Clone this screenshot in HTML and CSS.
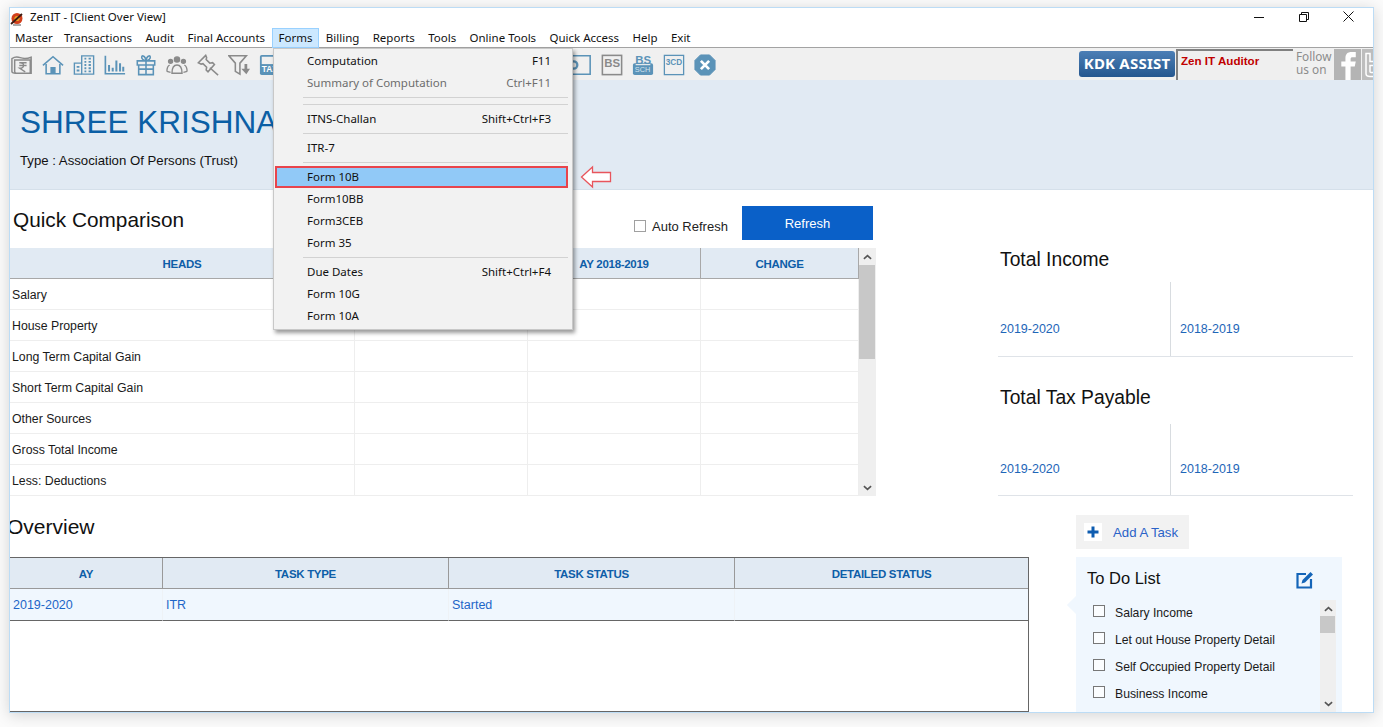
FILE: index.html
```html
<!DOCTYPE html>
<html lang="en">
<head>
<meta charset="utf-8">
<title>ZenIT - [Client Over View]</title>
<link rel="stylesheet" href="styles.css">
</head>
<body>
<div class="window">
  <div class="titlebar">
    <svg class="appicon" viewBox="0 0 14 14"><circle cx="7" cy="6.500" r="5.500" fill="#d2401c"/><circle cx="7" cy="6.500" r="2.600" fill="#e8a526"/><path d="M1 12 12 2" stroke="#3a1a10" stroke-width="1.800"/><path d="M3 13h8" stroke="#555" stroke-width="1"/></svg>
    <span class="titletext">ZenIT - [Client Over View]</span>
    <div class="winbtns">
      <span class="winbtn"><svg width="10" height="10" viewBox="0 0 10 10"><path d="M0 5.500h10" stroke="#111"/></svg></span>
      <span class="winbtn"><svg width="10" height="10" viewBox="0 0 10 10"><path d="M.5 2.500h7v7h-7zM2.500 2.500v-2h7v7h-2" fill="none" stroke="#111"/></svg></span>
      <span class="winbtn"><svg width="11" height="11" viewBox="0 0 11 11"><path d="M.5.500l10 10M10.500.500l-10 10" stroke="#111"/></svg></span>
    </div>
  </div>
  <nav class="menubar">
    <span class="mi">Master</span><span class="mi">Transactions</span><span class="mi">Audit</span><span class="mi">Final Accounts</span><span class="mi mi-active">Forms</span><span class="mi">Billing</span><span class="mi">Reports</span><span class="mi">Tools</span><span class="mi">Online Tools</span><span class="mi">Quick Access</span><span class="mi">Help</span><span class="mi">Exit</span>
  </nav>
  <div class="toolbar">
    <div class="tools">
      <svg class="ti" viewBox="0 0 24 24" fill="none" stroke="#8a8a8a" stroke-width="1.600"><path d="M1 5c3-2 6-2 9-1s8 1 12-.5V21H5c-2 0-4-.5-4-2z"/><path d="M4 6.500h17V21H6c-1.500 0-2-1-2-2z" fill="#f0f0f0"/><path d="M9 9.500h8M9 12.500h8M10 9.500c5 0 5 6-.5 6l6 4" stroke-width="1.500"/></svg>
      <svg class="ti" viewBox="0 0 24 24" fill="none" stroke="#5b93b8" stroke-width="1.700"><path d="M1 12.500 12 3l11 9.500"/><path d="M4.500 11v10.500h15V11"/><path d="M10 21.500V15h4v6.500" fill="#5b93b8"/></svg>
      <svg class="ti" viewBox="0 0 24 24" fill="none" stroke="#5b93b8" stroke-width="1.500"><path d="M9.500 22V2h13v20z"/><path d="M9.500 10h-8v12h8"/><path d="M12.500 5h2M17 5h2.500M12.500 8.500h2M17 8.500h2.500M12.500 12h2M17 12h2.500M12.500 15.500h2M17 15.500h2.500M12.500 19h2M17 19h2.500M4 14h3M4 18h3" stroke-width="2"/></svg>
      <svg class="ti" viewBox="0 0 24 24" fill="none" stroke="#5b93b8" stroke-width="1.800"><path d="M1.500 2v19.500H23"/><path d="M5.500 19v-7M9.500 19v-4M13.500 19V7M17.500 19v-9M21 19v-5" stroke-width="2.200"/></svg>
      <svg class="ti" viewBox="0 0 24 24" fill="none" stroke="#5b93b8" stroke-width="1.700"><path d="M2.500 7.500h19v4.500h-19zM4 12v10.500h16V12M12 7.500v15M4 16.500h16"/><path d="M12 7C9 7 6.500 5 7.500 2.500 9 1 11.500 3.500 12 7c.5-3.500 3-6 4.500-4.500C17.500 5 15 7 12 7z"/></svg>
      <svg class="ti" viewBox="0 0 24 24" fill="none" stroke="#8a8a8a" stroke-width="1.500"><circle cx="5" cy="8" r="2.200" fill="#8a8a8a"/><circle cx="12" cy="6" r="2.800" fill="#8a8a8a"/><circle cx="19" cy="8" r="2.200" fill="#8a8a8a"/><path d="M1 19c0-4 1-6 3-7M23 19c0-4-1-6-3-7M6.500 21c0-5 1-9 5.500-9s5.500 4 5.500 9zM1 19l4 1M23 19l-4 1"/></svg>
      <svg class="ti" viewBox="0 0 24 24" fill="none" stroke="#8a8a8a" stroke-width="1.700"><path d="M9.500 1.500 1.500 9.500l3 1.500 2-.5 4 4-.5 3 2 2 7-8-2-2-3 .5-4-4 .5-2z"/><path d="m14 15 9 8"/></svg>
      <svg class="ti" viewBox="0 0 24 24" fill="none" stroke="#8a8a8a" stroke-width="1.700"><path d="M1 2h19l-7 8v12l-5-3v-9z"/><path d="M18 11v5h-3.500l5.500 6 4-6h-3v-5z" fill="#8a8a8a" stroke="none"/></svg>
      <svg class="ti" viewBox="0 0 24 24"><rect x="1" y="1" width="22" height="22" rx="2" fill="#5b93b8"/><rect x="3" y="3" width="18" height="8" fill="#f0f0f0"/><text class="ti-text" x="3" y="20" fill="#fff">TAX</text></svg>
      <div class="tool-gap"></div>
      <svg class="ti" viewBox="0 0 24 24" fill="none" stroke="#5b93b8" stroke-width="1.700"><path d="M2 2h20v20H2z"/><circle cx="4" cy="12" r="4" stroke-width="2.500"/></svg>
      <svg class="ti" viewBox="0 0 24 24"><rect x="1.500" y="1.500" width="21" height="21" fill="none" stroke="#8a8a8a" stroke-width="1.700"/><text class="ti-text ti-big" x="3.500" y="14" fill="#8a8a8a">BS</text></svg>
      <svg class="ti" viewBox="0 0 24 24"><rect x="1" y="10" width="22" height="13" rx="2" fill="#5b93b8"/><text class="ti-text ti-big" x="3.500" y="11" fill="#5b93b8">BS</text><rect x="4" y="11" width="16" height="1.200" fill="#f0f0f0"/><text class="ti-small" x="3" y="20" fill="#d4e3ee">SCH</text></svg>
      <svg class="ti" viewBox="0 0 24 24"><rect x="1.500" y="1.500" width="21" height="21" fill="none" stroke="#5b93b8" stroke-width="1.400"/><text class="ti-3cd" x="3" y="12" fill="#5b93b8">3CD</text></svg>
      <svg class="ti ti-end" viewBox="0 0 24 24"><path d="M7 1h10l6 6v10l-6 6H7l-6-6V7z" fill="#5b93b8" stroke="#5b93b8" stroke-linejoin="round"/><path d="m7.500 7.500 9 9M16.500 7.500l-9 9" stroke="#fff" stroke-width="3"/></svg>
    </div>
    <div class="kdk">KDK ASSIST</div>
    <div class="zen">Zen IT Auditor</div>
    <div class="follow">Follow<br>us on</div>
    <div class="social"><svg viewBox="0 0 26 30"><path d="M11 30V17H7v-5h4V9c0-4 2-6 6-6h4v5h-3c-1.500 0-2 .5-2 2v2h5l-1 5h-4v13z" fill="#fff"/></svg></div>
    <div class="social social-tw"><svg viewBox="0 0 14 30"><path d="M4 4v20c0 2 2 3 4 3h6v-4H9c-1 0-1-.5-1-1v-6h6v-4H8V4z" fill="none" stroke="#fff" stroke-width="1.500"/></svg></div>
  </div>

  <header class="client">
    <h1 class="client-name">SHREE KRISHNA</h1>
    <p class="client-type">Type : Association Of Persons (Trust)</p>
  </header>

  <div class="row-top">
    <section class="compare">
      <div class="compare-head">
        <h2 class="h-quick">Quick Comparison</h2>
        <label class="auto"><span class="cb"></span>Auto Refresh</label>
        <button class="refresh">Refresh</button>
      </div>
      <div class="compare-body">
        <table class="grid">
          <colgroup><col class="c1"><col class="c2"><col class="c2"><col class="c3"></colgroup>
          <thead><tr><th>HEADS</th><th>AY 2019-2020</th><th>AY 2018-2019</th><th>CHANGE</th></tr></thead>
          <tbody>
            <tr><td>Salary</td><td></td><td></td><td></td></tr>
            <tr><td>House Property</td><td></td><td></td><td></td></tr>
            <tr><td>Long Term Capital Gain</td><td></td><td></td><td></td></tr>
            <tr><td>Short Term Capital Gain</td><td></td><td></td><td></td></tr>
            <tr><td>Other Sources</td><td></td><td></td><td></td></tr>
            <tr><td>Gross Total Income</td><td></td><td></td><td></td></tr>
            <tr><td>Less: Deductions</td><td></td><td></td><td></td></tr>
          </tbody>
        </table>
        <div class="sb sb-main">
          <svg class="sb-arrow" viewBox="0 0 10 6"><path d="m1 5 4-3.500L9 5" fill="none" stroke="#555" stroke-width="1.800"/></svg>
          <div class="sb-thumb"></div>
          <svg class="sb-arrow sb-down" viewBox="0 0 10 6"><path d="m1 1 4 3.500L9 1" fill="none" stroke="#555" stroke-width="1.800"/></svg>
        </div>
      </div>
    </section>
    <aside class="totals">
      <h3 class="t-title">Total Income</h3>
      <div class="t-box"><span>2019-2020</span><span>2018-2019</span></div>
      <h3 class="t-title t-title2">Total Tax Payable</h3>
      <div class="t-box t-box2"><span>2019-2020</span><span>2018-2019</span></div>
    </aside>
  </div>

  <div class="row-bottom">
    <section class="overview">
      <h2 class="h-over">Overview</h2>
      <div class="ov-frame">
        <table class="ov">
          <colgroup><col class="o1"><col class="o2"><col class="o2"><col class="o3"></colgroup>
          <thead><tr><th>AY</th><th>TASK TYPE</th><th>TASK STATUS</th><th>DETAILED STATUS</th></tr></thead>
          <tbody><tr><td>2019-2020</td><td>ITR</td><td>Started</td><td></td></tr></tbody>
        </table>
      </div>
    </section>
    <aside class="tasks">
      <div class="add">
        <svg class="add-plus" viewBox="0 0 18 18"><rect width="18" height="18" fill="#fff"/><path d="M9 3.500v11M3.500 9h11" stroke="#0e5cb0" stroke-width="3"/></svg>
        <span>Add A Task</span>
      </div>
      <div class="todo">
        <span class="notch"></span>
        <div class="todo-head">
          <h3 class="todo-title">To Do List</h3>
          <svg class="todo-edit" viewBox="0 0 18 18"><path d="M10 3H1.500v13.500H15V8" fill="none" stroke="#1565b8" stroke-width="2.200"/><path d="M5.500 12.500 6.500 9l8-8 2.500 2.500-8 8z" fill="#1565b8"/></svg>
        </div>
        <div class="todo-body">
          <ul class="todo-list">
            <li><span class="cb cb-dark"></span>Salary Income</li>
            <li><span class="cb cb-dark"></span>Let out House Property Detail</li>
            <li><span class="cb cb-dark"></span>Self Occupied Property Detail</li>
            <li><span class="cb cb-dark"></span>Business Income</li>
          </ul>
          <div class="sb sb-todo">
            <svg class="sb-arrow" viewBox="0 0 10 6"><path d="m1 5 4-3.500L9 5" fill="none" stroke="#555" stroke-width="1.800"/></svg>
            <div class="sb-thumb"></div>
            <svg class="sb-arrow sb-down" viewBox="0 0 10 6"><path d="m1 1 4 3.500L9 1" fill="none" stroke="#555" stroke-width="1.800"/></svg>
          </div>
        </div>
      </div>
    </aside>
  </div>

  <div class="popup">
    <div class="p-item"><span>Computation</span><span>F11</span></div>
    <div class="p-item p-dis"><span>Summary of Computation</span><span>Ctrl+F11</span></div>
    <div class="p-sep"></div>
    <div class="p-sep"></div>
    <div class="p-item"><span>ITNS-Challan</span><span>Shift+Ctrl+F3</span></div>
    <div class="p-sep"></div>
    <div class="p-item"><span>ITR-7</span></div>
    <div class="p-sep"></div>
    <div class="p-item p-hi"><span>Form 10B</span></div>
    <div class="p-item"><span>Form10BB</span></div>
    <div class="p-item"><span>Form3CEB</span></div>
    <div class="p-item"><span>Form 35</span></div>
    <div class="p-sep"></div>
    <div class="p-item"><span>Due Dates</span><span>Shift+Ctrl+F4</span></div>
    <div class="p-item"><span>Form 10G</span></div>
    <div class="p-item"><span>Form 10A</span></div>
    <svg class="p-arrow" viewBox="0 0 32 24"><path d="M1.500 12 12.500 2v5.500h18v9h-18V22z" fill="#fff" stroke="#e8555c" stroke-width="1.300"/></svg>
  </div>
</div>
</body>
</html>
```
FILE: styles.css
```css
* { box-sizing: border-box; }
html, body { margin: 0; height: 100%; }
body {
  background: #fbfbfb;
  font-family: "Liberation Sans", Arial, sans-serif;
  color: #111;
  overflow: hidden;
}
h1, h2, h3, p, ul { margin: 0; padding: 0; font-weight: 400; }
.window {
  position: relative;
  margin: 7px 0 0 9px;
  width: 1365px;
  height: 706px;
  background: #fff;
  border: 1px solid #bcdcf5;
  box-shadow: 0 2px 14px rgba(0, 0, 0, .16);
  overflow: hidden;
}
.titlebar { display: flex; align-items: center; height: 19px; padding-top: 1px; }
.appicon { width: 14px; height: 14px; margin: 1px 6px 0 0; flex: none; }
.titletext { font: 11.500px "Noto Sans", sans-serif; margin-top: -4px; color: #111; }
.winbtns { display: flex; margin-left: auto; margin-right: 2px; margin-top: -3px; }
.winbtn { width: 45px; height: 16px; display: flex; align-items: center; justify-content: center; }
.menubar {
  display: flex;
  height: 21px;
  padding-top: 1px;
  border-bottom: 1px solid #a3a3a3;
  font: 11.500px "Noto Sans", sans-serif;
  color: #111;
}
.mi { padding: 0 5.700px; line-height: 18px; height: 20px; border: 1px solid transparent; white-space: nowrap; }
.mi:first-child { padding: 0 3.500px 0 4px; }
.mi-active { background: #cce8ff; border-color: #99d1ff; }
.toolbar {
  display: flex;
  align-items: flex-start;
  height: 32px;
  background: #f0f0f0;
}
.tools { display: flex; align-items: center; gap: 9px; height: 31px; padding-left: 1px; margin-top: 1px; flex: none; }
.ti { width: 22px; height: 22px; flex: none; }
.ti-end { margin-left: 0; }
.tool-gap { width: 271px; flex: none; }
.ti-text { font: 700 9px "Liberation Sans", sans-serif; }
.ti-big { font-size: 12.500px; font-weight: 700; }
.ti-small { font: 400 8px "Liberation Sans", sans-serif; }
.ti-3cd { font: 700 9px "Liberation Sans", sans-serif; }
.kdk {
  margin: 3px 0 0 363px;
  width: 96px;
  height: 26px;
  flex: none;
  border-radius: 3px;
  background: linear-gradient(#4c7fb6, #25578f);
  color: #fff;
  font: 700 15px/25px "Noto Sans", sans-serif;
  letter-spacing: .2px;
  text-align: center;
  white-space: nowrap;
}
.zen {
  margin: 1px 0 0 1px;
  width: 117px;
  height: 31px;
  flex: none;
  background: #efefef;
  border-top: 2px solid #808080;
  border-left: 2px solid #808080;
  padding: 2px 0 0 3px;
  color: #c00000;
  font: 700 11.600px/15px "Liberation Sans", sans-serif;
  white-space: nowrap;
}
.follow { margin: 1px 0 0 3px; width: 38px; flex: none; color: #8c8c8c; font: 11.800px/13px "Noto Sans", sans-serif; padding-top: 1px; white-space: nowrap; overflow: hidden; }
.social { width: 27px; height: 31px; margin-top: 1px; background: #b4b4b4; flex: none; }
.social svg { display: block; width: 100%; height: 100%; }
.social-tw { width: 14px; margin-left: 1px; background: #bdbdbd; }
.client {
  height: 110px;
  background: #e1eaf3;
  padding: 22px 0 0 10px;
  border-bottom: 1px solid #d5e0ea;
}
.client-name { font-size: 31.500px; line-height: 41px; color: #0b5fa5; white-space: nowrap; }
.client-type { font-size: 13.200px; line-height: 16px; margin-top: 10px; }
.row-top { display: flex; height: 320px; }
.compare { width: 865px; flex: none; }
.compare-head { display: flex; height: 58px; position: relative; }
.h-quick { font-size: 20.800px; line-height: 24px; margin: 18px 0 0 3px; width: 621px; flex: none; white-space: nowrap; }
.auto { display: flex; align-items: center; font-size: 13px; margin-top: 28px; height: 16px; width: 108px; flex: none; color: #222; }
.cb { display: inline-block; width: 12px; height: 12px; background: #fff; border: 1px solid #a0a0a0; margin-right: 6px; flex: none; }
.refresh {
  width: 131px; height: 34px; margin-top: 16px; border: 0; background: #0a60c8;
  color: #fff; font: 13px "Liberation Sans", sans-serif; padding: 0; flex: none;
}
.compare-body { display: flex; height: 248px; }
.grid, .ov { border-collapse: separate; border-spacing: 0; table-layout: fixed; }
.grid { width: 849px; height: 248px; }
.c1 { width: 345px; }
.c2 { width: 173px; }
.c3 { width: 158px; }
.grid th {
  height: 31px; background: #e1eaf3; color: #0e5ea8; font-size: 11.500px; letter-spacing: -.3px; font-weight: 700;
  border-bottom: 1px solid #a8a8a8; border-right: 1px solid #a8a8a8; padding: 2px 0 0;
}
.grid td {
  height: 31px; padding: 2px 0 0 2px; font-size: 12.300px; color: #1a1a1a;
  border-bottom: 1px solid #eee; border-right: 1px solid #eee;
}
.sb { position: relative; background: #efefef; flex: none; }
.sb-main { width: 17px; height: 248px; }
.sb-arrow { display: block; width: 9px; height: 6px; position: absolute; left: 4px; top: 6px; }
.sb-down { top: auto; bottom: 5px; }
.sb-thumb { position: absolute; left: 0; right: 1px; top: 17px; height: 94px; background: #c8c8c8; }
.totals { margin-left: 123px; width: 355px; flex: none; }
.t-title { font-size: 19.300px; line-height: 24px; padding: 58px 0 0 2px; height: 92px; }
.t-title2 { padding-top: 29px; height: 67px; }
.t-box { display: flex; height: 75px; border-bottom: 1px solid #dfe3e8; color: #1e66b8; font-size: 12.500px; line-height: 15px; }
.t-box span { width: 172px; padding: 40px 0 0 2px; }
.t-box span + span { flex: 1; padding-left: 9px; border-left: 1px solid #d8dce0; }
.t-box2 { height: 72px; }
.t-box2 span { padding-top: 38px; }
.row-bottom { display: flex; height: 203px; }
.overview { width: 1019px; flex: none; }
.h-over { font-size: 21px; line-height: 24px; margin: 5px 0 0 -3px; height: 42px; }
.ov-frame { height: 155px; border: solid #666; border-width: 1px 1px 1px 0; }
.ov { width: 1018px; }
.o1 { width: 153px; }
.o2 { width: 286px; }
.o3 { width: 293px; }
.ov th {
  height: 31px; background: #e1eaf3; color: #0e5ea8; font-size: 11.500px; letter-spacing: -.3px; font-weight: 700;
  border-bottom: 1px solid #999; border-right: 1px solid #999; padding: 1px 0 0;
}
.ov th:last-child { border-right: 0; }
.ov td {
  height: 32px; background: #f0f7fe; color: #1e66c8; font-size: 12.500px; padding: 0 0 0 3px;
  border-bottom: 1px solid #666; border-right: 1px solid #eef2f6;
}
.ov td:last-child { border-right: 0; }
.tasks { margin-left: 47px; width: 266px; flex: none; }
.add {
  display: flex; align-items: center; width: 113px; height: 34px; margin-top: 5px;
  background: #f2f2f2; padding-left: 8px; color: #2a62c8; font-size: 13.200px;
}
.add-plus { width: 18px; height: 18px; margin-right: 11px; }
.todo { position: relative; margin-top: 8px; height: 160px; background: #f0f7fe; }
.notch { position: absolute; left: -8px; top: 40px; width: 16px; height: 16px; background: #f0f7fe; transform: rotate(45deg) scale(.8); }
.todo-head { display: flex; height: 42px; align-items: flex-start; }
.todo-title { font-size: 16.500px; line-height: 20px; margin: 11px 0 0 11px; color: #111; }
.todo-edit { width: 18px; height: 18px; margin: 14px 28px 0 auto; }
.todo-body { display: flex; height: 118px; position: relative; }
.todo-list { list-style: none; width: 244px; padding: 0 0 0 17px; flex: none; font-size: 12.200px; color: #1a1a1a; }
.todo-list li { display: flex; align-items: center; height: 27px; white-space: nowrap; }
.cb-dark { border-color: #777; background: #fbfdff; margin: -3px 10px 0 0; }
.sb-todo { width: 16px; height: 112px; margin-top: 1px; }
.sb-todo .sb-thumb { top: 16px; height: 17px; }
.popup {
  position: absolute;
  left: 263px;
  top: 40px;
  width: 300px;
  height: 282px;
  background: #f2f2f2;
  border: 1px solid #c8c8c8;
  padding: 1px;
  box-shadow: 2px 3px 4px rgba(0, 0, 0, .4);
  font: 11.500px "Noto Sans", sans-serif;
  color: #111;
}
.p-item { display: flex; justify-content: space-between; height: 22px; line-height: 21px; padding: 0 20px 0 32px; }
.p-dis { color: #6d6d6d; }
.p-hi { position: relative; background: #91c9f7; margin: 0 3px 0 0; padding-left: 30px; border: 2px solid #e8444c; line-height: 18px; }
.p-sep { height: 7px; margin: 0 3px 0 28px; position: relative; }
.p-sep::after { content: ""; position: absolute; left: 0; right: 0; top: 3px; height: 1px; background: #d2d2d2; }
.p-arrow { position: absolute; left: 306px; top: 116px; width: 32px; height: 24px; }
```
